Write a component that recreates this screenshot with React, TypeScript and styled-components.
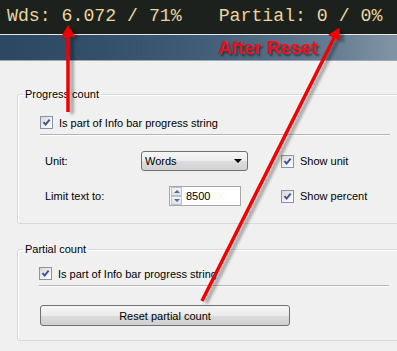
import styled, { createGlobalStyle } from 'styled-components'

const GlobalStyle = createGlobalStyle`
    html, body {
        margin: 0;
        padding: 0;
        background: #f0f0f0;
    }
`

const Screen = styled.div`
    position: relative;
    width: 397px;
    height: 351px;
    overflow: hidden;
    background: #f0f0f0;
    font-family: "Liberation Sans", Arial, sans-serif;
    font-size: 11px;
    color: #000;
`

const InfoBar = styled.div`
    display: flex;
    align-items: flex-end;
    height: 35px;
    padding-left: 7px;
    box-sizing: border-box;
    padding-bottom: 9px;
    background: #1d211d;
    border-bottom: 1px solid #e6e6e6;
    gap: 37px;

    span{
        font-family: "Liberation Mono", "Courier New", monospace;
        font-size: 18.2px;
        line-height: 18px;
        color: #ead59f;
        white-space: pre;
    }
`

const Banner = styled.div`
    height: 26px;
    padding: 3px 0 0 218px;
    box-sizing: border-box;
    background: linear-gradient(90deg, #2c4761 0%, #33506b 25%, #3d5973 45%, #4e6982 65%, #627b90 82%, #8194a4 100%);
    border-bottom: 1px solid #9aa8b4;
    font-family: "Liberation Sans", Arial, sans-serif;
    font-weight: bold;
    font-size: 18.7px;
    line-height: 20px;
    color: #e8121a;
    text-shadow: 2px 2px 2px rgba(0, 0, 0, 0.45);
`

const Panel = styled.div`
    display: flex;
    flex-direction: column;
    padding: 27px 0 0 17px;
    gap: 19px;
`

const Group = styled.fieldset`
    margin: 0;
    padding: 0;
    width: 400px;
    border: 1px solid #d5d9dc;
    border-radius: 3px;
    box-shadow: inset 1px 1px 0 #fff;

    legend{
        margin-left: 5px;
        padding: 0 2px;
        line-height: 13px;
        font-size: 11px;
    }
`

const GroupBody = styled.div`
    display: flex;
    flex-direction: column;
    padding: ${p => p.$top}px 0 ${p => p.$bottom}px ${p => p.$left}px;
`

const CheckRow = styled.label`
    display: flex;
    align-items: center;
    gap: 6px;
    height: 13px;
    font-size: 11px;
`

const Box = styled.span`
    display: inline-flex;
    width: 13px;
    height: 13px;
    box-sizing: border-box;
    border: 1px solid #8893a6;
    background: linear-gradient(135deg, #d8d8d8 0%, #f4f4f4 70%, #ffffff 100%);
    flex-shrink: 0;

    svg{
        display: block;
    }
`

const Separator = styled.div`
    height: 1px;
    width: ${p => p.$width}px;
    background: #b4b4b4;
    border-bottom: 1px solid #fff;
    margin-top: 5px;
`

const OptionsGrid = styled.div`
    display: grid;
    grid-template-columns: 96px 140px auto;
    grid-template-rows: 20px 20px;
    row-gap: 15px;
    align-items: center;
    margin-top: 15px;
    margin-left: 5px;
    font-size: 11px;
`

const Combo = styled.div`
    display: flex;
    align-items: center;
    justify-content: space-between;
    width: 107px;
    height: 20px;
    box-sizing: border-box;
    padding: 0 3px 0 3px;
    border: 1px solid #707070;
    border-radius: 3px;
    background: linear-gradient(180deg, #f6f6f6 0%, #ececec 50%, #dcdcdc 51%, #d2d2d2 100%);
`

const Arrow = styled.span`
    width: 0;
    height: 0;
    border-left: 4px solid transparent;
    border-right: 4px solid transparent;
    border-top: 4px solid #000;
    margin-right: 2px;
`

const Spinner = styled.div`
    display: flex;
    align-items: center;
    width: 72px;
    height: 20px;
    margin-left: 28px;
    box-sizing: border-box;
    border: 1px solid #a7a7a7;
    background: #fff;
`

const SpinButtons = styled.div`
    display: flex;
    flex-direction: column;
    width: 11px;
    height: 18px;
    margin: 0 4px 0 1px;
`

const SpinHalf = styled.div`
    flex: 1;
    display: flex;
    align-items: center;
    justify-content: center;
    background: linear-gradient(180deg, #f4f6f8, #dfe3e8);
    border: 1px solid #b9c2cc;
    box-sizing: border-box;

    &::after{
        content: '';
        border-left: 3px solid transparent;
        border-right: 3px solid transparent;
        ${p => p.$up ? 'border-bottom: 3px solid #4b6d9b;' : 'border-top: 3px solid #4b6d9b;'}
    }
`

const Button = styled.button`
    width: 250px;
    height: 21px;
    margin-top: 18px;
    margin-left: 1px;
    padding: 0;
    border: 1px solid #707070;
    border-radius: 3px;
    background: linear-gradient(180deg, #f4f4f4 0%, #ebebeb 50%, #dddddd 51%, #cfcfcf 100%);
    font-family: "Liberation Sans", Arial, sans-serif;
    font-size: 11px;
    color: #000;
`

const Overlay = styled.svg`
    position: absolute;
    left: 0;
    top: 0;
    pointer-events: none;
`

const Check = ({label}) => (
    <CheckRow>
        <Box>
            <svg width="11" height="11" viewBox="0 0 11 11">
                <path d="M2.5 5.2 L4.6 7.6 L8.6 2.6" fill="none" stroke="#3d4f9f" strokeWidth="1.9" />
            </svg>
        </Box>
        {label}
    </CheckRow>
)

const App = () => {
    return (
        <Screen>
            <GlobalStyle />
            <InfoBar>
                <span>Wds: 6.072 / 71%</span>
                <span>Partial: 0 / 0%</span>
            </InfoBar>
            <Banner>After Reset</Banner>
            <Panel>
                <Group>
                    <legend>Progress count</legend>
                    <GroupBody $top={15} $bottom={17} $left={22}>
                        <Check label="Is part of Info bar progress string" />
                        <Separator $width={350} />
                        <OptionsGrid>
                            <span>Unit:</span>
                            <Combo>Words<Arrow /></Combo>
                            <Check label="Show unit" />
                            <span>Limit text to:</span>
                            <Spinner>
                                <SpinButtons>
                                    <SpinHalf $up />
                                    <SpinHalf />
                                </SpinButtons>
                                8500
                            </Spinner>
                            <Check label="Show percent" />
                        </OptionsGrid>
                    </GroupBody>
                </Group>
                <Group>
                    <legend>Partial count</legend>
                    <GroupBody $top={11} $bottom={14} $left={21}>
                        <Check label="Is part of Info bar progress string" />
                        <Separator $width={350} />
                        <Button>Reset partial count</Button>
                    </GroupBody>
                </Group>
            </Panel>
            <Overlay width="397" height="351" viewBox="0 0 397 351">
                <defs>
                    <filter id="shade" x="-20%" y="-20%" width="140%" height="140%">
                        <feDropShadow dx="4" dy="2" stdDeviation="1.6" floodColor="#000" floodOpacity="0.35" />
                    </filter>
                </defs>
                <g filter="url(#shade)" fill="#f20000" stroke="#f20000">
                    <line x1="68" y1="112" x2="68" y2="34" strokeWidth="3.5" />
                    <polygon points="68,25 61,37 75,37" stroke="none" />
                    <line x1="202" y1="301" x2="334" y2="38" strokeWidth="3.5" />
                    <polygon points="339.5,27.5 328,35 340,41" stroke="none" />
                </g>
            </Overlay>
        </Screen>
    )
}

export default App
